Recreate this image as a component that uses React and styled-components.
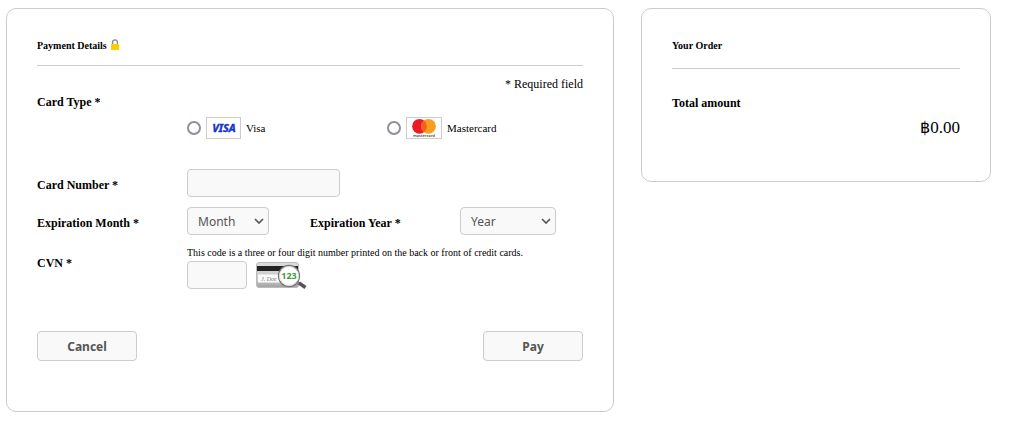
import React, { useState } from 'react'
import styled, { createGlobalStyle } from 'styled-components'

const GlobalStyle = createGlobalStyle`
  * {
    box-sizing: border-box;
  }

  body {
    margin: 0;
    background: #fff;
    color: #000;
    font-family: "Liberation Serif", "Times New Roman", serif;
    font-size: 12px;
    line-height: 16px;
  }
`

const Page = styled.main`
  display: grid;
  grid-template-columns: minmax(0, 608fr) minmax(0, 350fr);
  column-gap: 27px;
  align-items: start;
  padding: 8px 21px 26px 6px;
`

const Panel = styled.section`
  border: 1px solid #ccc;
  border-radius: 10px;
  padding: 30px 30px ${props => props.$bottom}px;
`

const Heading = styled.h1`
  display: flex;
  align-items: center;
  gap: 4px;
  margin: 0;
  padding-bottom: ${props => props.$space}px;
  border-bottom: 1px solid #ccc;
  font-size: 10px;
  line-height: 14px;
`

const Required = styled.p`
  margin: 10px 0 2px;
  text-align: right;
`

const CardTypes = styled.fieldset`
  margin: 0 0 30px;
  padding: 0;
  border: 0;
`

const Legend = styled.legend`
  padding: 0 0 7px;
  font-weight: bold;
`

const Choices = styled.div`
  display: flex;
  padding-left: 150px;
`

const Choice = styled.label`
  display: flex;
  align-items: center;
  gap: 5px;
  width: 200px;
  font-size: 11px;
`

const Radio = styled.input`
  appearance: none;
  width: 14px;
  height: 14px;
  margin: 0;
  border: 2px solid #8f8f9d;
  border-radius: 50%;
  background: #fff;

  &:checked {
    border-width: 4px;
    border-color: #0060df;
  }
`

const Row = styled.div`
  display: flex;
  align-items: ${props => props.$align || 'center'};
  margin-bottom: ${props => props.$space}px;
`

const Label = styled.label`
  flex: 0 0 150px;
  padding-top: ${props => props.$top || 4}px;
  font-weight: bold;
`

const Field = styled.div`
  flex: ${props => (props.$width ? `0 0 ${props.$width}px` : '1')};
`

const Input = styled.input`
  display: block;
  width: ${props => props.$width}px;
  height: 28px;
  padding: 0 10px;
  border: 1px solid #ccc;
  border-radius: 4px;
  background: #f9f9f9;
  color: #555;
  font: 12px "Noto Sans", sans-serif;
`

const SelectBox = styled.div`
  display: grid;
  align-items: center;
  width: ${props => props.$width}px;

  > * {
    grid-area: 1 / 1;
  }

  > svg {
    justify-self: end;
    margin-right: 5px;
    pointer-events: none;
  }
`

const SelectInput = styled.select`
  appearance: none;
  width: 100%;
  height: 28px;
  padding: 0 20px 0 10px;
  border: 1px solid #ccc;
  border-radius: 4px;
  background: #f9f9f9;
  color: #555;
  font: 12px "Noto Sans", sans-serif;
`

const Hint = styled.p`
  margin: 0 0 2px;
  font-size: 10px;
  line-height: 12px;
`

const Code = styled.div`
  display: flex;
  gap: 8px;
`

const Actions = styled.div`
  display: flex;
  justify-content: space-between;
`

const Button = styled.button`
  width: 100px;
  height: 30px;
  padding: 0;
  border: 1px solid #ccc;
  border-radius: 4px;
  background: #f9f9f9;
  color: #555;
  font: bold 12px "Noto Sans", sans-serif;
  cursor: pointer;
`

const Total = styled.dl`
  margin: 26px 0 0;
`

const TotalLabel = styled.dt`
  font-weight: bold;
`

const Amount = styled.dd`
  margin: 7px 0 0;
  text-align: right;
  font-size: 17px;
  line-height: 20px;
`

const Currency = styled.span`
  font-family: "DejaVu Sans", sans-serif;
  font-size: 16px;
  line-height: 16px;
`

const LockIcon = () => (
  <svg width="8" height="14" viewBox="0 0 8 14" aria-hidden="true">
    <path d="M1.6 6V3.2a2.4 2.4 0 0 1 4.8 0V6" fill="none" stroke="#888" strokeWidth="1.3" />
    <rect y="5" width="8" height="6" rx=".5" fill="#fc0" />
  </svg>
)

const VisaLogo = () => (
  <svg width="35" height="22" viewBox="0 0 35 22" role="img" aria-label="Visa card">
    <rect x=".5" y=".5" width="34" height="21" fill="#fff" stroke="#ccc" />
    <text x="18" y="15" textAnchor="middle" fill="#1434cb" stroke="#1434cb" strokeWidth=".4" fontFamily="Noto Sans, sans-serif" fontSize="11" fontWeight="bold" fontStyle="italic">VISA</text>
  </svg>
)

const MastercardLogo = () => (
  <svg width="36" height="22" viewBox="0 0 36 22" role="img" aria-label="Mastercard card">
    <rect x=".5" y=".5" width="35" height="21" fill="#fff" stroke="#ccc" />
    <circle cx="13.5" cy="9.3" r="7.4" fill="#eb1c26" />
    <circle cx="22.5" cy="9.3" r="7.4" fill="#f79e1f" />
    <path d="M18 3.4a7.4 7.4 0 0 1 0 11.8a7.4 7.4 0 0 1 0-11.8z" fill="#f26122" />
    <text x="18" y="20" textAnchor="middle" fill="#333" fontFamily="Open Sans, sans-serif" fontSize="4" fontWeight="600">mastercard</text>
  </svg>
)

const CvnIcon = () => (
  <svg width="52" height="28" viewBox="0 0 52 28" role="img" aria-label="Security code on the card">
    <defs>
      <linearGradient id="card" x1="0" y1="0" x2="0" y2="1">
        <stop offset="0" stopColor="#ddd" />
        <stop offset=".7" stopColor="#c8c8c8" />
        <stop offset="1" stopColor="#a0a0a0" />
      </linearGradient>
    </defs>
    <rect x="1.5" y="1.5" width="42" height="25" rx="2.5" fill="url(#card)" stroke="#bbb" />
    <rect x="2" y="5" width="41" height="5" fill="#222" />
    <rect x="3" y="13.5" width="25" height="8" fill="#fafafa" />
    <text x="6" y="19.5" fill="#777" fontFamily="Liberation Serif, serif" fontSize="6" fontStyle="italic">J. Doe</text>
    <path d="M41 20.5l3.5 2.5" stroke="#888" strokeWidth="3" />
    <path d="M44 22l6.5 4.5" stroke="#555" strokeWidth="3.4" />
    <circle cx="34" cy="15" r="10.5" fill="#fff" stroke="#777" strokeWidth="1.3" />
    <circle cx="34" cy="15" r="9.5" fill="none" stroke="#ddd" />
    <text x="34" y="18" textAnchor="middle" fill="#3a9c35" fontFamily="Noto Sans, sans-serif" fontSize="9" fontWeight="bold">123</text>
  </svg>
)

const Select = ({ id, width, placeholder, options }) => (
  <SelectBox $width={width}>
    <SelectInput id={id} defaultValue="">
      <option value="">{placeholder}</option>
      {options.map(option => <option key={option}>{option}</option>)}
    </SelectInput>
    <svg width="10" height="6" viewBox="0 0 10 6" aria-hidden="true">
      <path d="M1 1l4 4 4-4" fill="none" stroke="#555" strokeWidth="1.7" />
    </svg>
  </SelectBox>
)

const months = ['01', '02', '03', '04', '05', '06', '07', '08', '09', '10', '11', '12']
const years = ['2024', '2025', '2026', '2027', '2028', '2029', '2030']

const cards = [
  { value: 'visa', name: 'Visa', Logo: VisaLogo },
  { value: 'mastercard', name: 'Mastercard', Logo: MastercardLogo },
]

const PaymentForm = () => {
  const [cardType, setCardType] = useState('')

  return (
    <form onSubmit={e => e.preventDefault()}>
      <Required>* Required field</Required>
      <CardTypes>
        <Legend>Card Type *</Legend>
        <Choices>
          {cards.map(({ value, name, Logo }) => (
            <Choice key={value}>
              <Radio
                type="radio"
                name="cardType"
                value={value}
                checked={cardType === value}
                onChange={() => setCardType(value)}
              />
              <Logo />
              {name}
            </Choice>
          ))}
        </Choices>
      </CardTypes>
      <Row $space={10}>
        <Label htmlFor="cardNumber">Card Number *</Label>
        <Input id="cardNumber" $width={153} inputMode="numeric" />
      </Row>
      <Row $space={12}>
        <Label htmlFor="month">Expiration Month *</Label>
        <Field $width={123}>
          <Select id="month" width={82} placeholder="Month" options={months} />
        </Field>
        <Label htmlFor="year">Expiration Year *</Label>
        <Select id="year" width={96} placeholder="Year" options={years} />
      </Row>
      <Row $space={42} $align="flex-start">
        <Label htmlFor="cvn" $top={8}>CVN *</Label>
        <Field>
          <Hint id="cvnHint">
            This code is a three or four digit number printed on the back or front of credit cards.
          </Hint>
          <Code>
            <Input id="cvn" $width={60} inputMode="numeric" aria-describedby="cvnHint" />
            <CvnIcon />
          </Code>
        </Field>
      </Row>
      <Actions>
        <Button type="button">Cancel</Button>
        <Button type="submit">Pay</Button>
      </Actions>
    </form>
  )
}

const App = () => (
  <>
    <GlobalStyle />
    <Page>
      <Panel $bottom={50}>
        <Heading $space={12}>
          Payment Details
          <LockIcon />
        </Heading>
        <PaymentForm />
      </Panel>
      <Panel $bottom={43}>
        <Heading as="h2" $space={15}>Your Order</Heading>
        <Total>
          <TotalLabel>Total amount</TotalLabel>
          <Amount><Currency>฿</Currency>0.00</Amount>
        </Total>
      </Panel>
    </Page>
  </>
)

export default App
